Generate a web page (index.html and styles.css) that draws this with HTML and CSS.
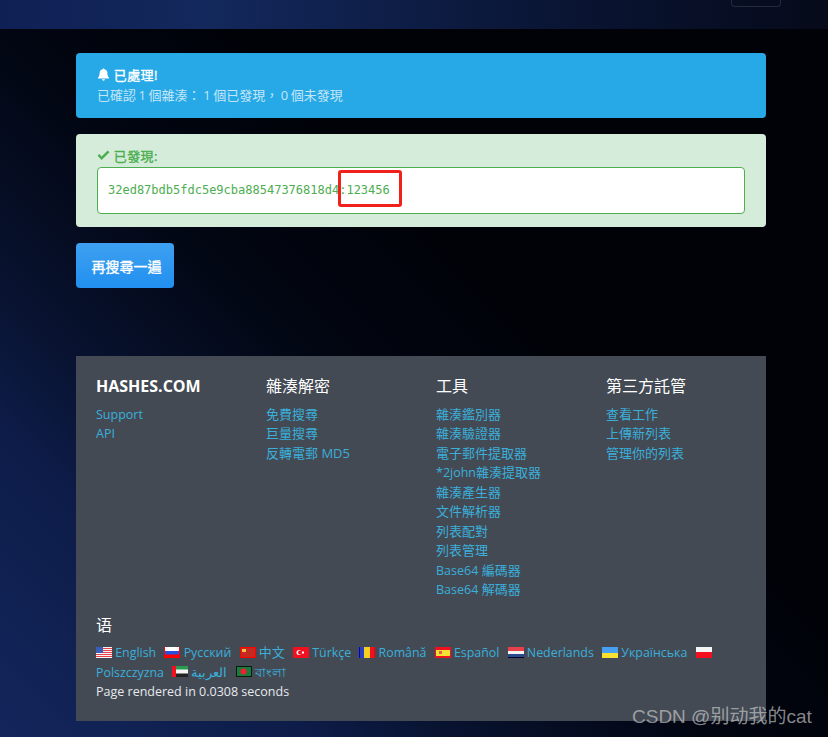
FILE: index.html
```html
<!DOCTYPE html>
<html lang="zh-Hant">
<head>
    <meta charset="UTF-8">
    <meta name="viewport" content="width=device-width, initial-scale=1.0">
    <title>Hashes.com</title>
    <link rel="stylesheet" href="styles.css">
</head>
<body>

    <div class="topbar">
        <div class="toggler"></div>
    </div>

    <div class="container">
        <div class="alert alert-info">
            <div class="alert-title">
                <svg class="icon" viewBox="0 0 14 14"><path fill="currentColor" d="M7 0.500c.6 0 1 .4 1 .9 2 .4 3.200 2 3.200 4 0 3 .8 4.200 1.800 5.100v.8H1v-.8c1-.9 1.800-2.100 1.800-5.100 0-2 1.200-3.600 3.200-4 0-.5.4-.9 1-.9zM5.400 12h3.200c0 .9-.7 1.600-1.600 1.600S5.400 12.900 5.400 12z"/></svg>
                已處理!
            </div>
            <div class="alert-text">已確認 1 個雜湊： 1 個已發現， 0 個未發現</div>
        </div>

        <div class="alert alert-success">
            <div class="alert-title">
                <svg class="icon" viewBox="0 0 14 14"><path fill="currentColor" d="M5 11.800L.6 7.400l1.900-1.900L5 8l6.500-6.500 1.900 1.900z"/></svg>
                已發現:
            </div>
            <div class="result-box">
                32ed87bdb5fdc5e9cba88547376818d4:123456
                <span class="highlight"></span>
            </div>
        </div>

        <button class="btn">再搜尋一遍</button>

        <footer class="footer">
            <div class="footer-cols">
                <div>
                    <h5 class="brand">HASHES.COM</h5>
                    <a href="#" class="en">Support</a>
                    <a href="#" class="en">API</a>
                </div>
                <div>
                    <h5>雜湊解密</h5>
                    <a href="#">免費搜尋</a>
                    <a href="#">巨量搜尋</a>
                    <a href="#">反轉電郵 MD5</a>
                </div>
                <div>
                    <h5>工具</h5>
                    <a href="#">雜湊鑑別器</a>
                    <a href="#">雜湊驗證器</a>
                    <a href="#">電子郵件提取器</a>
                    <a href="#"><span class="en">*2john</span>雜湊提取器</a>
                    <a href="#">雜湊產生器</a>
                    <a href="#">文件解析器</a>
                    <a href="#">列表配對</a>
                    <a href="#">列表管理</a>
                    <a href="#"><span class="en">Base64</span> 編碼器</a>
                    <a href="#"><span class="en">Base64</span> 解碼器</a>
                </div>
                <div>
                    <h5>第三方託管</h5>
                    <a href="#">查看工作</a>
                    <a href="#">上傳新列表</a>
                    <a href="#">管理你的列表</a>
                </div>
            </div>

            <h5 class="lang-title">语</h5>
            <div class="langs">
                <svg class="flag" viewBox="0 0 16 11"><rect width="16" height="11" fill="#f4f4f4"/><path stroke="#e8404a" d="M0 1.500h16M0 3.500h16M0 5.500h16M0 7.500h16M0 9.500h16"/><rect width="7" height="6" fill="#3a5fb8"/></svg>
                <a href="#">English</a>
                <svg class="flag" viewBox="0 0 16 11"><rect width="16" height="11" fill="#f00"/><rect x="1" width="14" height="4" fill="#fff"/><rect x="1" y="4" width="14" height="3.500" fill="#2a50e0"/></svg>
                <a href="#">Русский</a>
                <svg class="flag" viewBox="0 0 16 11"><rect width="16" height="11" fill="#f00"/><rect x="1" y="1" width="14" height="9" fill="#c42a20"/><rect x="2" y="2" width="4" height="3" fill="#f0c040"/></svg>
                <a href="#" class="wide">中文</a>
                <svg class="flag" viewBox="0 0 16 11"><rect width="16" height="11" fill="#f01020"/><circle cx="6" cy="5.500" r="2.500" fill="#fff"/><circle cx="7" cy="5.500" r="2" fill="#f01020"/><rect x="9" y="4.500" width="2" height="2" fill="#fff"/></svg>
                <a href="#">Türkçe</a>
                <svg class="flag" viewBox="0 0 16 11"><rect width="16" height="11" fill="#f4d020"/><rect width="5" height="11" fill="#2a40c0"/><rect x="11" width="5" height="11" fill="#f01020"/><rect width="1" height="11" fill="#00c"/><rect x="15" width="1" height="11" fill="#f00"/></svg>
                <a href="#">Română</a>
                <svg class="flag" viewBox="0 0 16 11"><rect width="16" height="11" fill="#f01020"/><rect x="1" y="3" width="14" height="6" fill="#f4e030"/><rect x="4" y="4" width="3" height="3" fill="#e06050"/></svg>
                <a href="#">Español</a>
                <svg class="flag" viewBox="0 0 16 11"><rect width="16" height="11" fill="#f4f4f4"/><rect width="16" height="4" fill="#e8404a"/><rect y="7" width="16" height="4" fill="#2a4a90"/><rect y="10" width="16" height="1" fill="#002"/></svg>
                <a href="#">Nederlands</a>
                <svg class="flag" viewBox="0 0 16 11"><rect width="16" height="6" fill="#48a0f0"/><rect y="6" width="16" height="5" fill="#f8e030"/></svg>
                <a href="#">Українська</a>
                <svg class="flag" viewBox="0 0 16 11"><rect width="16" height="11" fill="#f01020"/><rect width="16" height="5" fill="#f4f4f4"/></svg>
                <a href="#">Polszczyzna</a>
                <svg class="flag" viewBox="0 0 16 11"><rect width="16" height="11" fill="#f4f4f4"/><rect width="16" height="3.500" fill="#2a9a50"/><rect y="7.500" width="16" height="3.500" fill="#222"/><rect width="4" height="11" fill="#f01020"/></svg>
                <a href="#" class="wide">العربية</a>
                <svg class="flag" viewBox="0 0 16 11"><rect width="16" height="11" fill="#0a1a0a"/><rect x="1" y="1" width="14" height="9" fill="#1a7a40"/><circle cx="7.500" cy="5.500" r="3" fill="#f02030"/></svg>
                <a href="#" class="wide">বাংলা</a>
            </div>
            <div class="rendered">Page rendered in 0.0308 seconds</div>
        </footer>
    </div>

    <div class="watermark">CSDN @别动我的cat</div>

</body>
</html>
```

FILE: styles.css
```css
html, body {
    height: 100%;
}

body {
    margin: 0;
    overflow: hidden;
    font-family: "Open Sans", "Noto Sans CJK TC", sans-serif;
    font-size: 13px;
    line-height: 19.500px;
    color: #fff;
    background-color: #000208;
    background-image: linear-gradient(45deg, #13265c 0%, #0d1c48 20%, #08122e 30%, #020612 45%, #000208 60%);
}

.topbar {
    height: 29px;
    display: flex;
    justify-content: flex-end;
    padding-right: 47px;
    background: linear-gradient(90deg, #0f2055, #13285c 25%, #0a1636 65%, #060a1a);
}

.toggler {
    width: 48px;
    height: 6px;
    border: 1px solid #252b3c;
    border-top: none;
    border-radius: 0 0 4px 4px;
}

.container {
    width: 690px;
    margin: 24px 0 0 76px;
}

.alert {
    border-radius: 4px;
    padding: 13px 21px;
    margin-bottom: 16px;
}

.alert-title {
    letter-spacing: 0.400px;
    -webkit-text-stroke: 0.350px currentColor;
}

.alert-info {
    height: 39px;
    background: #26a9e6;
    color: #fff;
}

.alert-info .alert-text {
    font-family: "Open Sans", "Noto Sans CJK SC", sans-serif;
    word-spacing: -0.800px;
    color: #c5e6f7;
}

.alert-success {
    height: 67px;
    background: #d5ecdb;
    color: #4cae4f;
}

.icon {
    width: 13px;
    height: 13px;
    vertical-align: -1px;
}

.result-box {
    position: relative;
    height: 45px;
    padding-left: 10px;
    background: #fff;
    border: 1px solid #4cae4f;
    border-radius: 4px;
    font-family: "DejaVu Sans Mono", "Liberation Mono", monospace;
    font-size: 12px;
    line-height: 45px;
    letter-spacing: 0;
    color: #4cae4f;
}

.highlight {
    position: absolute;
    left: 240px;
    top: 2px;
    width: 58px;
    height: 31px;
    border: 3px solid #f0201a;
    border-radius: 3px;
}

.btn {
    display: block;
    width: 98px;
    height: 45px;
    padding: 0 0 0 3px;
    border: none;
    border-radius: 4px;
    background: linear-gradient(180deg, #3ea0f0, #2190f0);
    color: #fff;
    font-family: inherit;
    font-size: 14px;
    -webkit-text-stroke: 0.350px currentColor;
}

.footer {
    box-sizing: border-box;
    height: 365px;
    margin-top: 68px;
    padding: 19px 20px;
    background: #434a54;
    font-size: 13px;
}

.footer-cols {
    display: grid;
    grid-template-columns: 170px 170px 170px 1fr;
    height: 239px;
}

.footer h5 {
    margin: 0 0 7.750px;
    font-size: 16px;
    font-weight: 400;
    line-height: 22px;
}

.footer h5.brand {
    font-weight: 700;
}

.footer a {
    color: #3bafda;
    text-decoration: none;
}

.footer-cols a {
    display: block;
}

.en {
    font-size: 12.500px;
}

.footer h5.lang-title {
    margin-bottom: 7px;
}

.langs {
    font-size: 12.400px;
    line-height: 19.500px;
}

.langs a {
    margin-right: 5px;
}

.langs a.wide {
    font-size: 13px;
    line-height: 1;
}

.flag {
    width: 16px;
    height: 11px;
    vertical-align: -0.500px;
}

.rendered {
    font-size: 12.500px;
    color: #e6e9ed;
}

.watermark {
    position: absolute;
    left: 632px;
    top: 705px;
    font-family: "Liberation Sans", "Noto Sans CJK SC", sans-serif;
    font-size: 19px;
    line-height: 24px;
    color: rgba(210, 210, 210, 0.65);
}
```
